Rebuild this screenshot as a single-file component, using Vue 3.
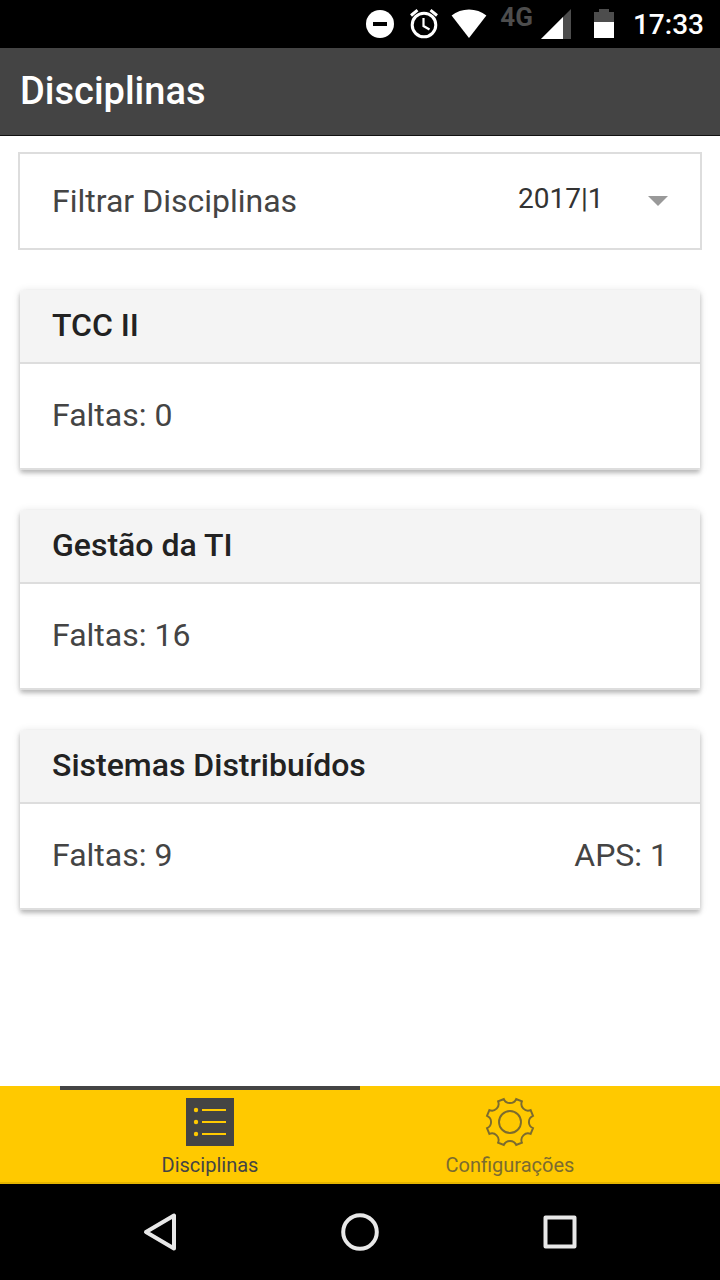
<script setup>
import { ref } from 'vue'

const period = ref('2017|1')
const periods = ['2017|1', '2016|2']

const courses = [
  { name: 'TCC II', absences: 0 },
  { name: 'Gestão da TI', absences: 16 },
  { name: 'Sistemas Distribuídos', absences: 9, aps: 1 },
]

// Gear outline: eight concave notches joined by short teeth.
const point = (deg) => {
  const a = (deg * Math.PI) / 180
  return `${(24 + 23.8 * Math.sin(a)).toFixed(2)} ${(24 - 23.8 * Math.cos(a)).toFixed(2)}`
}
let gear = `M${point(-15)}`
for (let i = 0; i < 8; i++) {
  gear += `A6.7 6.7 0 0 0 ${point(i * 45 + 15)}L${point(i * 45 + 30)}`
}
gear += 'Z'
</script>

<template>
  <div class="screen">
    <div class="status">
      <svg width="28" height="28" viewBox="0 0 28 28" class="dnd">
        <circle cx="14" cy="14" r="14" fill="#fff" />
        <path d="M7 14H21" stroke="#000" stroke-width="4" />
      </svg>
      <svg width="28" height="30" viewBox="0 0 28 30" class="alarm" fill="none" stroke="#fff" stroke-width="3">
        <circle cx="14" cy="16" r="11.8" />
        <path d="M1 6.5L7.5 1.2M27 6.5L20.5 1.2" />
        <path d="M13.5 9V17L19.5 20.5" stroke-width="2.2" />
      </svg>
      <svg width="36" height="30" viewBox="0 0 36 30" class="wifi">
        <path d="M18 29L.6 6.6C10-1.6 26-1.6 35.4 6.6Z" fill="#fff" />
      </svg>
      <span class="network">4G</span>
      <svg width="30" height="30" viewBox="0 0 30 30" class="signal">
        <path d="M0 30L30 0V30Z" fill="#4d4d4d" />
        <path d="M0 30L22 8V30Z" fill="#fff" />
      </svg>
      <svg width="20" height="30" viewBox="0 0 20 30" class="battery">
        <path d="M5 0H15V3H20V13H0V3H5Z" fill="#4d4d4d" />
        <path d="M0 13H20V29H0Z" fill="#fff" />
      </svg>
      <time>17:33</time>
    </div>

    <header class="header"><h1>Disciplinas</h1></header>

    <main class="content">
      <div class="filter">
        <label for="period">Filtrar Disciplinas</label>
        <div class="picker">
          <select id="period" v-model="period">
            <option v-for="p in periods" :key="p">{{ p }}</option>
          </select>
          <svg width="20" height="10" viewBox="0 0 20 10"><path d="M0 0H20L10 10Z" fill="#999" /></svg>
        </div>
      </div>

      <article v-for="c in courses" :key="c.name" class="card">
        <h2>{{ c.name }}</h2>
        <div class="details">
          <span>Faltas: {{ c.absences }}</span>
          <span v-if="c.aps">APS: {{ c.aps }}</span>
        </div>
      </article>
    </main>

    <nav class="tabs">
      <a href="#disciplinas" class="tab active">
        <svg width="48" height="48" viewBox="0 0 48 48">
          <path d="M0 0H48V48H0Z" fill="#444" />
          <path d="M16 12H40M16 24H40M16 36H40" stroke="#ffc900" stroke-width="2" />
          <g fill="#ffc900">
            <circle cx="10" cy="12" r="2.2" />
            <circle cx="10" cy="24" r="2.2" />
            <circle cx="10" cy="36" r="2.2" />
          </g>
        </svg>
        <span>Disciplinas</span>
      </a>
      <a href="#configuracoes" class="tab">
        <svg width="48" height="48" viewBox="0 0 48 48" class="gear">
          <path :d="gear" />
          <circle cx="24" cy="24" r="11" />
        </svg>
        <span>Configurações</span>
      </a>
    </nav>

    <div class="system">
      <button type="button" aria-label="Voltar">
        <svg width="40" height="40" viewBox="0 0 40 40"><path d="M34 3.5V36.5L6 20Z" /></svg>
      </button>
      <button type="button" aria-label="Início">
        <svg width="40" height="40" viewBox="0 0 40 40"><circle cx="20" cy="20" r="16.8" /></svg>
      </button>
      <button type="button" aria-label="Recentes">
        <svg width="40" height="40" viewBox="0 0 40 40"><rect x="5.5" y="5.5" width="29" height="29" /></svg>
      </button>
    </div>
  </div>
</template>

<style>
body {
  background: #fff;
}
</style>

<style scoped>
.screen {
  display: flex;
  flex-direction: column;
  min-height: 100vh;
  font-family: Roboto, "Liberation Sans", sans-serif;
  color: #444;
}
svg {
  display: block;
  flex: none;
}
.status {
  display: flex;
  align-items: center;
  justify-content: flex-end;
  box-sizing: border-box;
  height: 48px;
  padding-right: 16px;
  background: #000;
  color: #fff;
}
.dnd {
  margin-right: 16px;
}
.alarm {
  margin-right: 13px;
}
.wifi {
  margin-right: 13px;
}
.network {
  align-self: flex-start;
  margin: 3px 8px 0 0;
  font-size: 26px;
  line-height: 28px;
  font-weight: 700;
  color: #4d4d4d;
}
.signal {
  margin-right: 23px;
}
.battery {
  margin-right: 19px;
}
time {
  padding-top: 2px;
  font-size: 28px;
  line-height: 32px;
  font-weight: 500;
}
.header {
  display: flex;
  align-items: center;
  box-sizing: border-box;
  height: 88px;
  padding: 0 20px 2px;
  background: #444;
  border-bottom: 1px solid #111;
}
h1 {
  margin: 0;
  font-size: 38px;
  line-height: 44px;
  font-weight: 500;
  color: #fff;
}
.content {
  flex: 1;
  padding: 16px 20px;
}
.filter {
  display: flex;
  align-items: center;
  justify-content: space-between;
  box-sizing: border-box;
  height: 98px;
  margin: 0 -2px;
  padding: 0 32px;
  border: 2px solid #ddd;
  font-size: 32px;
}
.picker {
  display: flex;
  align-items: center;
}
select {
  appearance: none;
  width: 150px;
  height: 48px;
  margin: 0 -20px 0 0;
  padding: 0 0 6px;
  border: 0;
  background: transparent;
  font-family: inherit;
  font-size: 28px;
  color: #333;
}
.picker svg {
  pointer-events: none;
}
.card {
  margin-top: 40px;
  border-radius: 4px 4px 2px 2px;
  background: #fff;
  box-shadow: 0 3px 4px rgba(0, 0, 0, 0.22), 0 1px 8px rgba(0, 0, 0, 0.12);
  overflow: hidden;
}
h2 {
  margin: 0;
  padding: 16px 32px 18px;
  background: #f4f4f4;
  border-bottom: 2px solid #ddd;
  font-size: 32px;
  line-height: 38px;
  font-weight: 500;
  color: #222;
}
.details {
  display: flex;
  justify-content: space-between;
  padding: 32px 32px 34px;
  border-bottom: 2px solid #ddd;
  font-size: 32px;
  line-height: 38px;
}
.tabs {
  display: flex;
  padding: 0 60px;
  background: #ffc900;
  border-bottom: 2px solid #e6b500;
}
.tab {
  flex: 1;
  display: flex;
  flex-direction: column;
  align-items: center;
  gap: 7px;
  padding: 8px 0 5px;
  border-top: 4px solid transparent;
  font-size: 20px;
  line-height: 24px;
  color: #444;
  text-decoration: none;
}
.tab > * {
  opacity: 0.7;
}
.tab.active {
  border-top-color: #444;
}
.tab.active > * {
  opacity: 1;
}
.gear {
  fill: none;
  stroke: #444;
  stroke-width: 1.9;
  overflow: visible;
}
.system {
  display: flex;
  height: 96px;
  padding: 0 60px;
  background: #000;
}
.system button {
  flex: 1;
  display: flex;
  align-items: center;
  justify-content: center;
  padding: 0;
  border: 0;
  background: none;
}
.system svg {
  fill: none;
  stroke: #e8e8e8;
  stroke-width: 4;
  stroke-linejoin: round;
}
</style>
